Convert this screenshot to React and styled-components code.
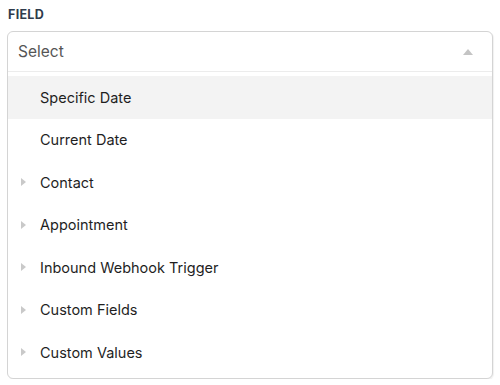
import React from "react";
import styled, { createGlobalStyle } from "styled-components";

const Global = createGlobalStyle`
  body {
    margin: 0;
    background: #ffffff;
    font-family: Inter, "Liberation Sans", sans-serif;
  }
`;

const Wrap = styled.div`
  padding: 8px 7px 0 7px;
  width: 486px;
`;

const Label = styled.div`
  font-size: 12.5px;
  font-weight: 700;
  color: #2f3b4c;
  letter-spacing: 0.3px;
  padding-left: 1px;
  height: 14px;
  line-height: 14px;
  margin-bottom: 9px;
`;

const Box = styled.div`
  border: 1px solid #d4d4d4;
  border-radius: 6px;
  box-shadow: 1px 1px 1px rgba(0, 0, 0, 0.06);
  background: #fff;
  overflow: hidden;
`;

const Head = styled.div`
  display: flex;
  align-items: center;
  justify-content: space-between;
  height: 39px;
  padding: 0 19px 0 10px;
  border-bottom: 1px solid #ececec;
  font-size: 15.5px;
  color: #555;
`;

const Caret = styled.span`
  width: 0;
  height: 0;
  border-left: 5px solid transparent;
  border-right: 5px solid transparent;
  border-bottom: 6px solid #c4c4c4;
`;

const List = styled.div`
  padding: 4px 0;
`;

const Row = styled.div`
  display: flex;
  align-items: center;
  height: 42.5px;
  padding-left: 13px;
  font-size: 14.5px;
  color: #1f1f1f;
  background: ${(p) => (p.$active ? "#f3f3f3" : "transparent")};
`;

const Arrow = styled.span`
  width: 0;
  height: 0;
  margin-right: 14px;
  border-top: 4px solid transparent;
  border-bottom: 4px solid transparent;
  border-left: 5px solid ${(p) => (p.$show ? "#c9c9c9" : "transparent")};
`;

const items = [
  { name: "Specific Date", nested: false, active: true },
  { name: "Current Date", nested: false },
  { name: "Contact", nested: true },
  { name: "Appointment", nested: true },
  { name: "Inbound Webhook Trigger", nested: true },
  { name: "Custom Fields", nested: true },
  { name: "Custom Values", nested: true },
];

export default function App() {
  return (
    <Wrap>
      <Global />
      <Label>FIELD</Label>
      <Box>
        <Head>
          <span>Select</span>
          <Caret />
        </Head>
        <List>
          {items.map((it) => (
            <Row key={it.name} $active={it.active}>
              <Arrow $show={it.nested} />
              {it.name}
            </Row>
          ))}
        </List>
      </Box>
    </Wrap>
  );
}
